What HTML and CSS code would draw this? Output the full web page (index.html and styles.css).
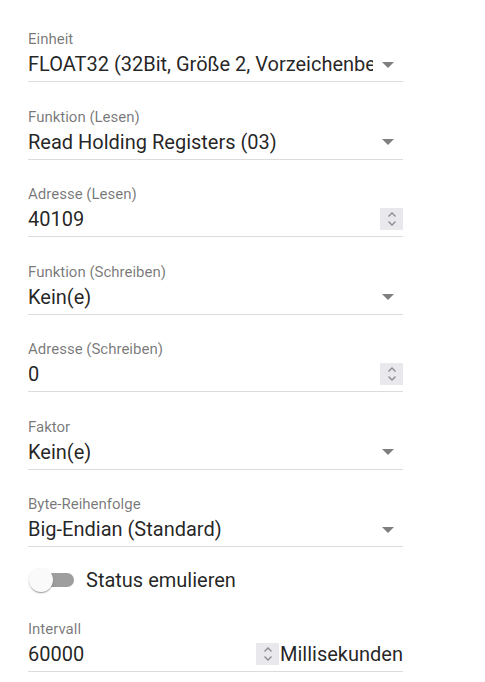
FILE: index.html
```html
<!DOCTYPE html>
<html lang="de">
<head>
<meta charset="utf-8">
<link rel="stylesheet" href="styles.css">
</head>
<body>
<div class="form">
  <div class="field">
    <label class="label">Einheit</label>
    <div class="control select"><span class="value">FLOAT32 (32Bit, Größe 2, Vorzeichenbehaftet)</span><span class="arrow"></span></div>
  </div>
  <div class="field">
    <label class="label">Funktion (Lesen)</label>
    <div class="control select"><span class="value">Read Holding Registers (03)</span><span class="arrow"></span></div>
  </div>
  <div class="field">
    <label class="label">Adresse (Lesen)</label>
    <div class="control number"><span class="value">40109</span><span class="spin"><svg width="10" height="16" viewBox="0 0 10 16"><path d="M1.5 5.5 L5 2 L8.5 5.5 M1.5 10.5 L5 14 L8.5 10.5" fill="none" stroke="#8b8b8b" stroke-width="1.3"/></svg></span></div>
  </div>
  <div class="field">
    <label class="label">Funktion (Schreiben)</label>
    <div class="control select"><span class="value">Kein(e)</span><span class="arrow"></span></div>
  </div>
  <div class="field">
    <label class="label">Adresse (Schreiben)</label>
    <div class="control number"><span class="value">0</span><span class="spin"><svg width="10" height="16" viewBox="0 0 10 16"><path d="M1.5 5.5 L5 2 L8.5 5.5 M1.5 10.5 L5 14 L8.5 10.5" fill="none" stroke="#8b8b8b" stroke-width="1.3"/></svg></span></div>
  </div>
  <div class="field">
    <label class="label">Faktor</label>
    <div class="control select"><span class="value">Kein(e)</span><span class="arrow"></span></div>
  </div>
  <div class="field">
    <label class="label">Byte-Reihenfolge</label>
    <div class="control select"><span class="value">Big-Endian (Standard)</span><span class="arrow"></span></div>
  </div>
  <div class="toggle-row">
    <span class="switch"><span class="track"></span><span class="thumb"></span></span>
    <span class="toggle-text">Status emulieren</span>
  </div>
  <div class="field interval">
    <label class="label">Intervall</label>
    <div class="control interval-control"><span class="value grow">60000</span><span class="spin"><svg width="10" height="16" viewBox="0 0 10 16"><path d="M1.5 5.5 L5 2 L8.5 5.5 M1.5 10.5 L5 14 L8.5 10.5" fill="none" stroke="#8b8b8b" stroke-width="1.3"/></svg></span><span class="unit">Millisekunden</span></div>
  </div>
</div>
</body>
</html>
```
FILE: styles.css
```css
html, body {
  margin: 0;
  padding: 0;
  background: #fff;
}
body {
  font-family: Roboto, "Noto Sans", sans-serif;
  color: rgba(0, 0, 0, 0.87);
}
.form {
  width: 375px;
  padding: 31px 0 0 28px;
  display: flex;
  flex-direction: column;
  gap: 26.5px;
}
.field {
  display: flex;
  flex-direction: column;
}
.label {
  font-size: 15px;
  line-height: 16px;
  color: rgba(0, 0, 0, 0.54);
  margin-bottom: 5px;
}
.control {
  display: flex;
  align-items: center;
  height: 24px;
  padding-bottom: 5px;
  border-bottom: 1px solid #dcdcdc;
  font-size: 20px;
  line-height: 24px;
}
.select .value {
  flex: 1;
  min-width: 0;
  overflow: hidden;
  white-space: nowrap;
  margin-right: 9px;
}
.arrow {
  flex: none;
  width: 0;
  height: 0;
  border-left: 6px solid transparent;
  border-right: 6px solid transparent;
  border-top: 6px solid rgba(0, 0, 0, 0.5);
  margin-right: 9px;
  margin-top: 1px;
}
.number .value {
  flex: 1;
}
.spin {
  flex: none;
  width: 23px;
  height: 22px;
  background: #e9e9ed;
  display: flex;
  align-items: center;
  justify-content: center;
}
.toggle-row {
  display: flex;
  align-items: center;
  height: 38px;
  margin-top: -12.5px;
  margin-bottom: -4.5px;
}
.switch {
  position: relative;
  width: 58px;
  height: 38px;
}
.track {
  position: absolute;
  left: 8px;
  top: 12px;
  width: 38px;
  height: 14px;
  border-radius: 7px;
  background: #9e9e9e;
}
.thumb {
  position: absolute;
  left: 1px;
  top: 7px;
  width: 24px;
  height: 24px;
  border-radius: 50%;
  background: #fafafa;
  box-shadow: 0 2px 1px -1px rgba(0,0,0,0.2), 0 1px 1px 0 rgba(0,0,0,0.14), 0 1px 3px 0 rgba(0,0,0,0.12);
}
.toggle-text {
  font-size: 20px;
  line-height: 24px;
  color: rgba(0, 0, 0, 0.87);
}
.interval-control .grow {
  flex: 1;
}
.unit {
  margin-left: 1px;
  color: rgba(0, 0, 0, 0.87);
}
```
